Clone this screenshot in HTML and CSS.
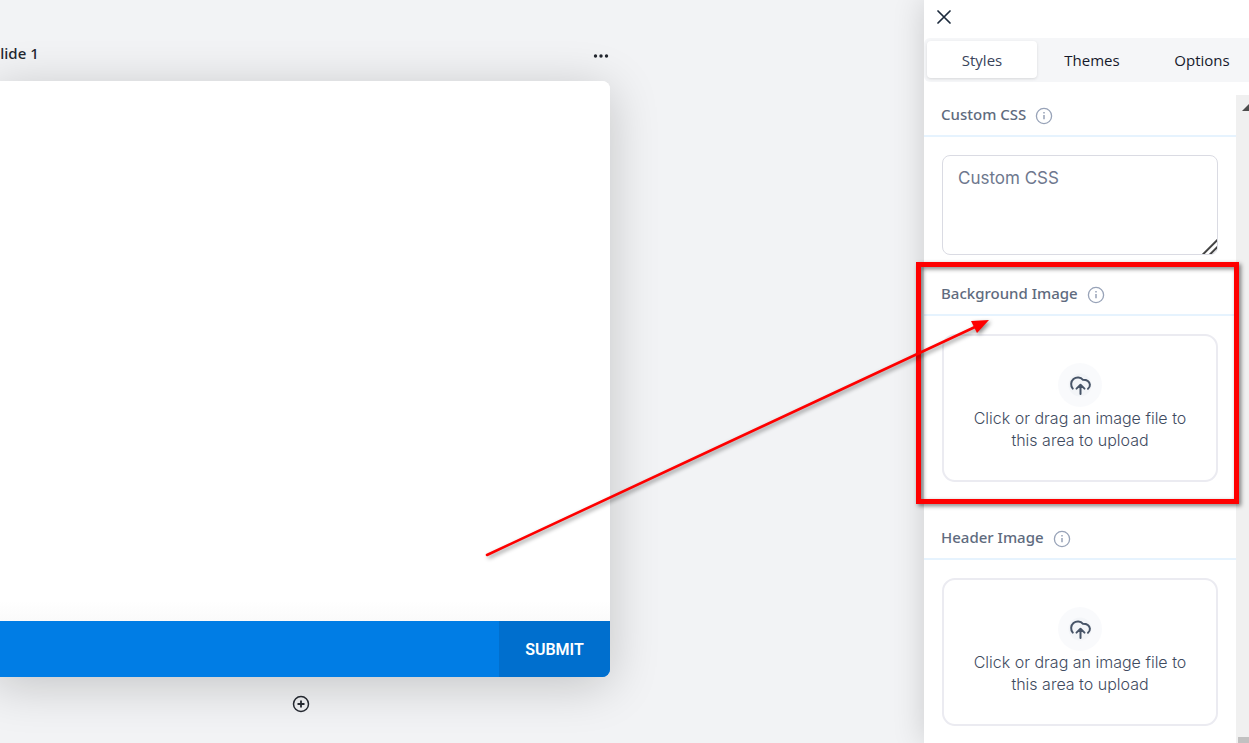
FILE: index.html
```
<!DOCTYPE html>
<html lang="en">
<head>
  <meta charset="UTF-8">
  <meta name="viewport" content="width=device-width, initial-scale=1.0">
  <title>Slide Editor</title>
  <link rel="stylesheet" href="styles.css">
</head>
<body>
  <svg width="0" height="0" class="sprite">
    <symbol id="icon-info" viewBox="0 0 18 18">
      <circle cx="9" cy="9" r="7.6" fill="none" stroke="currentColor" stroke-width="1.3"/>
      <path d="M9 8v4.2M9 5v1.6" fill="none" stroke="currentColor" stroke-width="1.5"/>
    </symbol>
    <symbol id="icon-upload" viewBox="0 0 24 24">
      <path d="M4.8 15.6A6.6 6.6 0 1 1 15 6.8C19 6.8 21.5 9 21.9 11.6A5 5 0 0 1 20 15.8M12.500 12V21M8.500 15.600 12.500 11.800l4 3.800" fill="none" stroke="currentColor" stroke-width="2" stroke-linecap="round" stroke-linejoin="round"/>
    </symbol>
  </svg>

  <div class="editor">
    <main class="canvas">
      <div class="slide-column">
        <div class="slide-header">
          <span class="slide-title">Slide 1</span>
          <button class="icon-btn" aria-label="Slide menu">
            <svg width="16" height="6" viewBox="0 0 16 6" fill="currentColor">
              <circle cx="2.5" cy="3" r="1.7"/>
              <circle cx="8" cy="3" r="1.7"/>
              <circle cx="13.5" cy="3" r="1.7"/>
            </svg>
          </button>
        </div>
        <div class="slide">
          <div class="slide-body"></div>
          <div class="slide-footer">
            <button class="submit-btn">SUBMIT</button>
          </div>
        </div>
        <button class="icon-btn add-btn" aria-label="Add slide">
          <svg width="18" height="18" viewBox="0 0 18 18" fill="none" stroke="currentColor">
            <circle cx="9" cy="9" r="7.5" stroke-width="1.5"/>
            <path d="M9 5.5v7M5.5 9h7" stroke-width="1.8"/>
          </svg>
        </button>
      </div>
    </main>

    <aside class="panel">
      <div class="panel-top">
        <button class="icon-btn close-btn" aria-label="Close">
          <svg width="14" height="14" viewBox="0 0 14 14" fill="none" stroke="currentColor" stroke-width="1.7" stroke-linecap="round">
            <path d="M1 1l12 12M13 1L1 13"/>
          </svg>
        </button>
      </div>
      <nav class="tabs">
        <button class="tab active">Styles</button>
        <button class="tab">Themes</button>
        <button class="tab">Options</button>
      </nav>

      <div class="panel-scroll">
        <div class="sections">
          <section class="section">
            <div class="section-title">
              <label for="custom-css">Custom CSS</label>
              <svg class="info"><use href="#icon-info"/></svg>
            </div>
            <div class="section-body">
              <textarea id="custom-css" placeholder="Custom CSS"></textarea>
            </div>
          </section>

          <section class="section highlighted">
            <div class="section-title">
              <span>Background Image</span>
              <svg class="info"><use href="#icon-info"/></svg>
            </div>
            <div class="section-body">
              <label class="upload" for="background-image">
                <span class="upload-icon"><svg><use href="#icon-upload"/></svg></span>
                <span class="upload-text">Click or drag an image file to this area to upload</span>
                <input type="file" id="background-image" accept="image/*">
              </label>
            </div>
            <div class="callout-box"></div>
            <svg class="callout-arrow" width="520" height="250" viewBox="0 0 520 250">
              <path d="M7 245 L495 17" stroke="#fe0000" stroke-width="2.6" stroke-linecap="round"/>
              <path d="M509 10 L491 11 L497 23 Z" fill="#fe0000"/>
            </svg>
          </section>

          <section class="section">
            <div class="section-title">
              <span>Header Image</span>
              <svg class="info"><use href="#icon-info"/></svg>
            </div>
            <div class="section-body">
              <label class="upload" for="header-image">
                <span class="upload-icon"><svg><use href="#icon-upload"/></svg></span>
                <span class="upload-text">Click or drag an image file to this area to upload</span>
                <input type="file" id="header-image" accept="image/*">
              </label>
            </div>
          </section>
        </div>
        <div class="scrollbar">
          <span class="scroll-arrow"></span>
          <span class="scroll-thumb"></span>
        </div>
      </div>
    </aside>
  </div>
</body>
</html>
```
FILE: styles.css
```
* {
  margin: 0;
  padding: 0;
  box-sizing: border-box;
}

body {
  font-family: 'Noto Sans', 'Open Sans', sans-serif;
  background: #f2f3f5;
  color: #23272f;
  overflow: hidden;
}

button {
  border: none;
  background: none;
  font: inherit;
  color: inherit;
  cursor: pointer;
}

.sprite {
  display: block;
}

.editor {
  display: flex;
  height: 100vh;
}

/* Canvas */
.canvas {
  flex: 1;
  min-width: 0;
  padding: 39px 314px 29px 0;
  overflow: hidden;
}

.slide-column {
  display: flex;
  flex-direction: column;
  height: 100%;
  margin-left: -8px;
}

.slide-header {
  display: flex;
  justify-content: space-between;
  align-items: center;
  height: 28px;
  margin-bottom: 14px;
  font-size: 15px;
  font-weight: 500;
}

.icon-btn {
  display: flex;
  align-items: center;
  justify-content: center;
}

.slide-header .icon-btn {
  padding-top: 6px;
  padding-right: 1px;
}

.slide {
  flex: 1;
  display: flex;
  flex-direction: column;
  background: #fff;
  border-radius: 8px;
  overflow: hidden;
  box-shadow: 0 8px 50px rgba(0, 0, 0, 0.2);
}

.slide-body {
  flex: 1;
  background: linear-gradient(to top, #fafafa, #fff 20px);
}

.slide-footer {
  display: flex;
  justify-content: flex-end;
  height: 56px;
  background: #007de5;
}

.submit-btn {
  width: 111px;
  background: #006fce;
  color: #fff;
  font-family: Roboto, sans-serif;
  font-size: 16px;
  font-weight: 600;
}

.add-btn {
  align-self: center;
  margin-top: 17px;
  height: 20px;
}

/* Side panel */
.panel {
  display: flex;
  flex-direction: column;
  flex: 0 0 325px;
  min-width: 0;
  background: #fff;
  box-shadow: 0 0 30px rgba(0, 0, 0, 0.16);
}

.panel-top {
  display: flex;
  align-items: center;
  height: 38px;
  padding: 0 13px 4px;
}

.close-btn {
  width: 14px;
  height: 14px;
  color: #1c2a3c;
}

.tabs {
  display: flex;
  height: 44px;
  padding: 3px;
  background: #f5f6f8;
  border-radius: 6px 0 0 6px;
  overflow: hidden;
}

.tab {
  flex: 0 0 110px;
  height: 37px;
  color: #15192b;
  font-family: 'Open Sans', sans-serif;
  font-size: 15px;
  border-radius: 4px;
}

.tab.active {
  background: #fff;
  color: #39435a;
  font-weight: 500;
  box-shadow: 0 1px 3px rgba(0, 0, 0, 0.12);
}

.panel-scroll {
  display: flex;
  flex: 1;
  min-height: 0;
  margin-top: 13px;
}

.sections {
  flex: 1;
}

.section-title {
  display: flex;
  align-items: center;
  gap: 9px;
  height: 42px;
  padding: 0 17px 2px;
  border-bottom: 2px solid #e6f3fe;
  color: #606b7e;
  font-size: 15px;
  font-weight: 500;
}

.info {
  width: 18px;
  height: 18px;
  margin-top: 4px;
  color: #98a3b8;
}

.section-body {
  padding: 18px 18px 36px;
}

.section:first-child .section-body {
  padding-bottom: 19px;
}

textarea {
  display: block;
  width: 100%;
  height: 100px;
  padding: 10px 15px;
  border: 1px solid #dadbe3;
  border-radius: 8px;
  font-family: Inter, sans-serif;
  font-size: 17px;
  line-height: 24px;
  resize: vertical;
}

textarea::placeholder {
  color: #6e788e;
}

textarea::-webkit-resizer {
  background: linear-gradient(135deg, transparent 10px, #444 11px, #444 12px, transparent 13px, transparent 15px, #444 16px, #444 17px, transparent 18px);
}

.upload {
  display: flex;
  flex-direction: column;
  align-items: center;
  padding: 27px 24px 29px;
  border: 2px solid #ebebf1;
  border-radius: 13px;
  cursor: pointer;
}

.upload input {
  display: none;
}

.upload-icon {
  display: flex;
  align-items: center;
  justify-content: center;
  width: 44px;
  height: 44px;
  border-radius: 50%;
  background: radial-gradient(circle, #f3f5f8 11px, #f9fafc 12px);
  color: #475467;
}

.upload-icon svg {
  width: 24px;
  height: 24px;
}

.upload-text {
  color: #3f4b5f;
  font-family: Inter, sans-serif;
  font-size: 16px;
  font-weight: 300;
  line-height: 22px;
  text-align: center;
}

.scrollbar {
  display: flex;
  flex-direction: column;
  justify-content: space-between;
  align-items: flex-end;
  width: 13px;
  background: #f0f0f0;
  overflow: hidden;
}

.scroll-arrow {
  width: 7px;
  height: 7px;
  margin-top: 9px;
  background: #4d4d4d;
  clip-path: polygon(100% 0, 100% 100%, 0 100%);
}

.scroll-thumb {
  width: 11px;
  height: 6px;
  background: #c1c1c1;
}

/* Callout drawn over the highlighted section */
.highlighted {
  position: relative;
}

.callout-box {
  position: absolute;
  inset: -12px -3px 14px -8px;
  border: 5px solid #fe0000;
  filter: drop-shadow(2px 2px 2px rgba(0, 0, 0, 0.5));
  pointer-events: none;
}

.callout-arrow {
  position: absolute;
  top: 36px;
  left: -444px;
  filter: drop-shadow(2px 2px 2px rgba(0, 0, 0, 0.45));
  pointer-events: none;
}
```
